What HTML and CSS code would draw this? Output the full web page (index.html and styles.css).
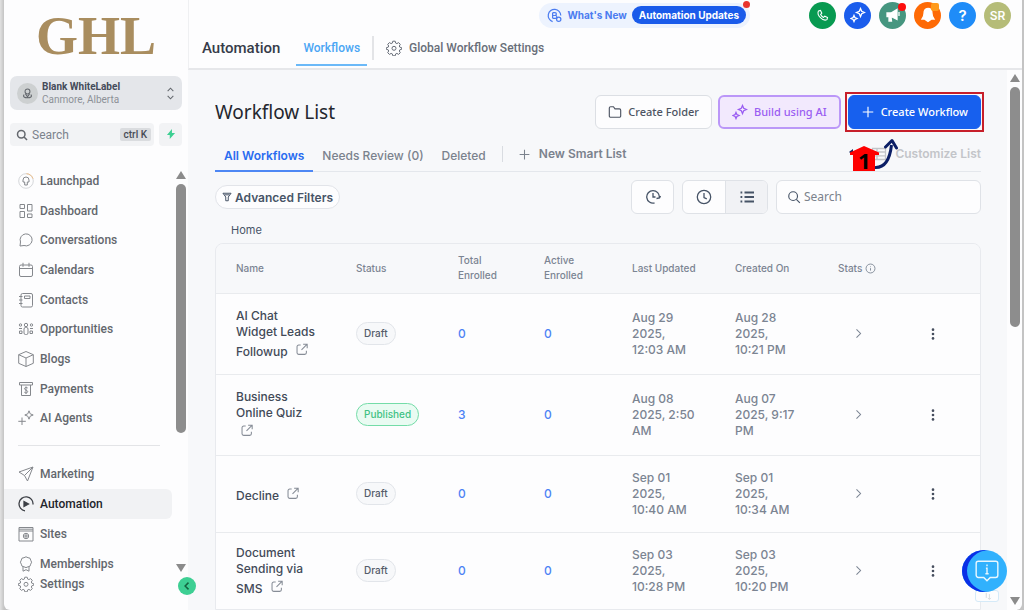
FILE: index.html
```html
<!DOCTYPE html>
<html lang="en">
<head>
    <meta charset="UTF-8">
    <meta name="viewport" content="width=device-width, initial-scale=1.0">
    <title>Automation - Workflows</title>
    <link rel="stylesheet" href="styles.css">
</head>
<body>
    <!-- Icons used more than once -->
    <svg class="sprite" aria-hidden="true">
        <symbol id="i-gear" viewBox="0 0 16 16"><path d="M6.8 1.2h2.4l.5 1.9 1.2.5 1.7-1 1.7 1.7-1 1.7.5 1.2 1.9.5v1.6l-1.9.5-.5 1.2 1 1.7-1.7 1.7-1.7-1-1.2.5-.5 1.9H6.8l-.5-1.9-1.2-.5-1.7 1-1.7-1.7 1-1.7-.5-1.2-1.9-.5V7.700l1.900-.5.5-1.200-1-1.700 1.700-1.700 1.700 1 1.200-.5z"/><circle cx="8" cy="8.300" r="2"/></symbol>
        <symbol id="i-sparkles" viewBox="0 0 16 16"><path d="M10.500 1.500l1.200 2.800 2.800 1.200-2.800 1.200-1.200 2.800-1.200-2.800-2.800-1.200 2.800-1.200zM4 8.500l.9 2.100 2.100.9-2.100.9L4 14.500l-.9-2.100-2.100-.9 2.100-.9z"/></symbol>
        <symbol id="i-open" viewBox="0 0 16 16"><path d="M7 2.500H4.500a2 2 0 0 0-2 2v7.500a2 2 0 0 0 2 2H12a2 2 0 0 0 2-2V9.500M10 1.500h5v5M15 1.500L8 8.500"/></symbol>
        <symbol id="i-next" viewBox="0 0 16 16"><path d="M5.500 3l5 5-5 5"/></symbol>
        <symbol id="i-dots" viewBox="0 0 16 16"><circle cx="8" cy="3" r="1.500"/><circle cx="8" cy="8" r="1.500"/><circle cx="8" cy="13" r="1.500"/></symbol>
        <symbol id="i-plus" viewBox="0 0 16 16"><path d="M8 2v12M2 8h12"/></symbol>
        <symbol id="i-search" viewBox="0 0 16 16"><circle cx="7" cy="7" r="5"/><path d="M10.700 10.700l4 4"/></symbol>
        <symbol id="i-up" viewBox="0 0 10 8"><path d="M5 0l5 8H0z"/></symbol>
        <symbol id="i-down" viewBox="0 0 10 8"><path d="M5 8L0 0h10z"/></symbol>
    </svg>

    <div class="app">
        <aside class="sidebar">
            <div class="logo">GHL</div>
            <button class="account">
                <span class="account-avatar"><svg class="icon" viewBox="0 0 16 16"><circle cx="8" cy="5.500" r="3"/><path d="M5.500 8.500L8 12l2.500-3.500M4 9.500c-5 5 13 5 8 0"/></svg></span>
                <span class="account-text"><strong>Blank WhiteLabel</strong><span>Canmore, Alberta</span></span>
                <svg class="icon account-toggle" viewBox="0 0 10 16"><path d="M1.500 5L5 1.500 8.500 5M1.500 11L5 14.500 8.500 11"/></svg>
            </button>
            <div class="side-search">
                <label class="search-field">
                    <svg class="icon"><use href="#i-search"/></svg>
                    <input type="text" placeholder="Search" aria-label="Search menu">
                    <kbd>ctrl K</kbd>
                </label>
                <button class="quick" aria-label="Quick actions"><svg viewBox="0 0 16 16"><path d="M9.500 0L1.500 9.500h4.500V16L14.500 6.500H9.500z"/></svg></button>
            </div>

            <div class="side-scroll">
                <nav class="menu">
                    <ul class="menu-main">
                        <li><a href="#"><svg class="icon" viewBox="0 0 16 16"><circle cx="8" cy="8" r="7.300" stroke="#d5d7da"/><path d="M8.500.7a7.300 7.300 0 0 1 6.500 5" stroke="#eebf8a"/><path d="M5 9V7a3 3 0 0 1 6 0v2H9.300v3H6.700V9z"/></svg>Launchpad</a></li>
                        <li><a href="#"><svg class="icon" viewBox="0 0 16 16"><path d="M2 1.500h4.500v4H2zM9.500 1.500H14v6.500H9.500zM2 8.500h4.500v6H2zM9.500 11H14v3.500H9.500z"/></svg>Dashboard</a></li>
                        <li><a href="#"><svg class="icon" viewBox="0 0 16 16"><path d="M2 14l.5-4A6 6 0 1 1 6 13.500z"/></svg>Conversations</a></li>
                        <li><a href="#"><svg class="icon" viewBox="0 0 16 16"><rect x="1.500" y="3" width="13" height="11.500" rx="1.500"/><path d="M1.500 6.500h13M5 .8v4M11 .8v4"/></svg>Calendars</a></li>
                        <li><a href="#"><svg class="icon" viewBox="0 0 16 16"><rect x="3" y="1.500" width="11.500" height="13.500" rx="1.500"/><path d="M6.500 4h5.500v2.500H6.500zM1 4.500h3.500M1 8h3.500M1 11.500h3.500"/></svg>Contacts</a></li>
                        <li><a href="#"><svg class="icon" viewBox="0 0 16 16"><circle cx="8" cy="4" r="1.700"/><rect x="6" y="6.500" width="4" height="7" rx="1.500"/><circle cx="2.500" cy="4" r="1.200"/><circle cx="13.500" cy="4" r="1.200"/><path d="M1 7.500h3M12 7.500h3M1.500 10h2.500v2.500H1.500zM12 10h2.500v2.500H12z"/></svg>Opportunities</a></li>
                        <li><a href="#"><svg class="icon" viewBox="0 0 16 16"><path d="M8 .5l7.300 3.200v8.600L8 15.500.7 12.300V3.700zM.7 3.700L8 7l7.300-3.300M8 7v8.500"/></svg>Blogs</a></li>
                        <li><a href="#"><svg class="icon" viewBox="0 0 16 16"><path d="M1.500 1.500h13v2.500h-13zM3.500 4v10.500h9V4M9.700 7c-1-1-3.200-.6-3.200.7C6.500 9.300 9.700 9 9.700 10.600c0 1.400-2.400 1.700-3.400.6M8 5.500v7.500"/></svg>Payments</a></li>
                        <li><a href="#"><svg class="icon" viewBox="0 0 16 16"><path d="M11 .8l1.200 3 3 1.200-3 1.200-1.200 3-1.200-3-3-1.200 3-1.200zM4 7.500v7.500M.3 11.300h7.500"/></svg>AI Agents</a></li>
                    </ul>
                    <ul class="menu-extra">
                        <li><a href="#"><svg class="icon" viewBox="0 0 16 16"><path d="M1 6L15 1 9.500 15 6.500 9.500zM6.500 9.500L15 1"/></svg>Marketing</a></li>
                        <li><a href="#" class="active"><svg class="icon" viewBox="0 0 16 16"><path d="M7 14.800A7 7 0 1 1 15 8.500"/><path d="M6 5.500L10.500 8 6 10.500z" fill="currentColor"/></svg>Automation</a></li>
                        <li><a href="#"><svg class="icon" viewBox="0 0 16 16"><path d="M1 1.500h14v13.500H1zM1 5h14M1 3.200h14"/><circle cx="8" cy="10" r="2.700"/><path d="M8 7.300v5.400M5.300 10h5.400"/></svg>Sites</a></li>
                        <li><a href="#"><svg class="icon" viewBox="0 0 16 16"><path d="M8 .8l2 .9 2 .5.700 2 .9 2-.9 2-.7 2-2 .6-2 .8-2-.8-2-.6-.7-2-.9-2 .9-2 .7-2 2-.5zM5 11v4.200l3-1.500 3 1.500V11"/></svg>Memberships</a></li>
                    </ul>
                </nav>
                <div class="scrollbar" aria-hidden="true">
                    <svg class="arrow"><use href="#i-up"/></svg>
                    <span class="thumb"></span>
                    <svg class="arrow arrow-end"><use href="#i-down"/></svg>
                </div>
            </div>
            <a href="#" class="settings"><svg class="icon"><use href="#i-gear"/></svg>Settings</a>
            <button class="collapse" aria-label="Collapse sidebar"><svg class="icon" viewBox="0 0 16 16"><path d="M10 3.500L5.500 8l4.500 4.500"/></svg></button>
        </aside>

        <div class="main">
            <header class="topbar">
                <div class="topbar-actions">
                    <div class="news">
                        <svg class="icon" viewBox="0 0 16 16"><path d="M6 14.500A6.700 6.700 0 1 1 14.700 8"/><path d="M6 5v6M6 5h2.500a1.500 1.500 0 0 1 0 3H6h3a1.500 1.500 0 0 1 0 3H6"/><circle cx="12.500" cy="12" r="2.300"/></svg>
                        <a href="#">What's New</a>
                        <a href="#" class="news-badge">Automation Updates</a>
                    </div>
                    <button class="round green" aria-label="Phone"><svg class="icon" viewBox="0 0 16 16"><path d="M3 2.500l2.500-.7 1.700 3.400-1.500 1.500c.8 1.700 2 2.900 3.600 3.700l1.500-1.500 3.400 1.700-.7 2.500C8.500 15.500.5 8 3 2.500z"/></svg></button>
                    <button class="round blue" aria-label="AI assistant"><svg class="icon"><use href="#i-sparkles"/></svg></button>
                    <button class="round teal" aria-label="Announcements"><svg class="icon" viewBox="0 0 16 16"><path d="M2 6h4l6-3.500v10L6 9.500H2zM4 10v4h2.500L6 10z" fill="currentColor"/><path d="M14 5v4"/></svg><span class="dot"></span></button>
                    <button class="round orange" aria-label="Notifications"><svg class="icon" viewBox="0 0 16 16"><path d="M8 1.500c3 0 4 2 4 5s1 4 2 5.500H2c1-1.500 2-2.500 2-5.500s1-5 4-5zM6.500 13.500h3l-1.500 1z" fill="currentColor"/></svg><span class="dot amber"></span></button>
                    <button class="round sky" aria-label="Help">?</button>
                    <button class="round olive" aria-label="Profile">SR</button>
                </div>
                <div class="topbar-nav">
                    <h2>Automation</h2>
                    <a href="#" class="current">Workflows</a>
                    <span class="rule"></span>
                    <a href="#" class="global"><svg class="icon"><use href="#i-gear"/></svg>Global Workflow Settings</a>
                </div>
            </header>

            <div class="body">
                <main class="content">
                    <div class="heading">
                        <h1>Workflow List</h1>
                        <button class="btn"><svg class="icon" viewBox="0 0 16 16"><path d="M1.500 3.500a1.500 1.500 0 0 1 1.500-1.500h3.200L8 4.500h5a1.500 1.500 0 0 1 1.500 1.500v6.500a1.500 1.500 0 0 1-1.500 1.500H3a1.500 1.500 0 0 1-1.500-1.500z"/></svg>Create Folder</button>
                        <button class="btn btn-ai"><svg class="icon"><use href="#i-sparkles"/></svg>Build using AI</button>
                        <button class="btn btn-primary"><svg class="icon"><use href="#i-plus"/></svg>Create Workflow</button>
                    </div>

                    <div class="tabs">
                        <a href="#" class="selected">All Workflows</a>
                        <a href="#">Needs Review (0)</a>
                        <a href="#">Deleted</a>
                        <button class="smart"><svg class="icon"><use href="#i-plus"/></svg>New Smart List</button>
                        <button class="customize" disabled><svg class="icon" viewBox="0 0 16 16"><path d="M1.500 2.500h13v11h-13zM1.500 6h13M1.500 9.800h13M6 2.500v11"/></svg>Customize List</button>
                        <!-- Step marker pointing at the create button -->
                        <div class="step">
                            <svg viewBox="0 0 50 36"><path d="M1 15l4-3v6z" fill="#12245f"/><path d="M16 9L31 15.500v2.500H27V34H5V18H2v-2.500z" fill="#fe0000"/><path d="M27 30.500C37 31 42 21 43.500 8" fill="none" stroke="#0c1f66" stroke-width="3"/><path d="M37.500 10l6.500-6.500 4.500 7.500" fill="none" stroke="#0c1f66" stroke-width="3" stroke-linecap="round" stroke-linejoin="round"/></svg>
                            <span>1</span>
                        </div>
                    </div>

                    <div class="tools">
                        <button class="filters"><svg class="icon" viewBox="0 0 16 16"><path d="M1.500 2h13l-4.500 6v6H6V8zM4 4.500h8"/></svg>Advanced Filters</button>
                        <button class="tool" aria-label="Activity"><svg class="icon" viewBox="0 0 16 16"><path d="M9.500 14A6.300 6.300 0 1 1 14.300 8.500M8 4v4h2.500M11.500 9.500l3-.5 1-2"/></svg></button>
                        <div class="switch">
                            <button aria-label="Recent"><svg class="icon" viewBox="0 0 16 16"><circle cx="8" cy="8" r="6.700"/><path d="M8 4v4.500l2.800 1.300"/></svg></button>
                            <button class="on" aria-label="List view"><svg class="icon" viewBox="0 0 16 16"><path d="M5.500 3.500H15M5.500 8H15M5.500 12.500H15M1.500 3.500h1.800M1.500 8h1.800M1.500 12.500h1.800" stroke-width="2"/></svg></button>
                        </div>
                        <label class="find">
                            <svg class="icon"><use href="#i-search"/></svg>
                            <input type="text" placeholder="Search" aria-label="Search workflows">
                        </label>
                    </div>

                    <a href="#" class="crumb">Home</a>

                    <div class="table-wrap">
                        <table>
                            <colgroup><col class="c-name"><col class="c-status"><col class="c-total"><col class="c-active"><col class="c-date"><col class="c-date"><col class="c-stats"><col></colgroup>
                            <thead>
                                <tr>
                                    <th>Name</th>
                                    <th>Status</th>
                                    <th>Total Enrolled</th>
                                    <th>Active Enrolled</th>
                                    <th class="nowrap">Last Updated</th>
                                    <th class="nowrap">Created On</th>
                                    <th class="nowrap">Stats <svg class="icon" viewBox="0 0 16 16"><circle cx="8" cy="8" r="6.500"/><path d="M8 7.500v3.500M8 5v1"/></svg></th>
                                    <th></th>
                                </tr>
                            </thead>
                            <tbody>
                                <tr class="tall">
                                    <td class="name"><a href="#">AI Chat Widget Leads Followup <svg class="icon"><use href="#i-open"/></svg></a></td>
                                    <td><span class="tag">Draft</span></td>
                                    <td class="count">0</td>
                                    <td class="count">0</td>
                                    <td>Aug 29 2025, 12:03 AM</td>
                                    <td>Aug 28 2025, 10:21 PM</td>
                                    <td class="more"><button aria-label="Show stats"><svg class="icon"><use href="#i-next"/></svg></button></td>
                                    <td class="menu-cell"><button aria-label="Row menu"><svg><use href="#i-dots"/></svg></button></td>
                                </tr>
                                <tr class="tall">
                                    <td class="name"><a href="#">Business Online Quiz <svg class="icon"><use href="#i-open"/></svg></a></td>
                                    <td><span class="tag live">Published</span></td>
                                    <td class="count">3</td>
                                    <td class="count">0</td>
                                    <td>Aug 08 2025, 2:50 AM</td>
                                    <td>Aug 07 2025, 9:17 PM</td>
                                    <td class="more"><button aria-label="Show stats"><svg class="icon"><use href="#i-next"/></svg></button></td>
                                    <td class="menu-cell"><button aria-label="Row menu"><svg><use href="#i-dots"/></svg></button></td>
                                </tr>
                                <tr>
                                    <td class="name"><a href="#">Decline <svg class="icon"><use href="#i-open"/></svg></a></td>
                                    <td><span class="tag">Draft</span></td>
                                    <td class="count">0</td>
                                    <td class="count">0</td>
                                    <td>Sep 01 2025, 10:40 AM</td>
                                    <td>Sep 01 2025, 10:34 AM</td>
                                    <td class="more"><button aria-label="Show stats"><svg class="icon"><use href="#i-next"/></svg></button></td>
                                    <td class="menu-cell"><button aria-label="Row menu"><svg><use href="#i-dots"/></svg></button></td>
                                </tr>
                                <tr>
                                    <td class="name"><a href="#">Document Sending via SMS <svg class="icon"><use href="#i-open"/></svg></a></td>
                                    <td><span class="tag">Draft</span></td>
                                    <td class="count">0</td>
                                    <td class="count">0</td>
                                    <td>Sep 03 2025, 10:28 PM</td>
                                    <td>Sep 03 2025, 10:20 PM</td>
                                    <td class="more"><button aria-label="Show stats"><svg class="icon"><use href="#i-next"/></svg></button></td>
                                    <td class="menu-cell"><button aria-label="Row menu"><svg><use href="#i-dots"/></svg></button></td>
                                </tr>
                            </tbody>
                        </table>
                    </div>
                </main>
                <div class="scrollbar page-scroll" aria-hidden="true">
                    <svg class="arrow"><use href="#i-up"/></svg>
                    <span class="thumb"></span>
                    <svg class="arrow arrow-end"><use href="#i-down"/></svg>
                </div>
            </div>
        </div>

        <div class="help">
            <button class="help-bubble" aria-label="Help"><svg class="icon" viewBox="0 0 24 24"><path d="M4 3h16a2 2 0 0 1 2 2v11a2 2 0 0 1-2 2h-5l-3 3-3-3H4a2 2 0 0 1-2-2V5a2 2 0 0 1 2-2zM12 6v1.500M11 9.500h1v5M10.500 14.500h3"/></svg></button>
            <div class="help-tail"><svg class="icon" viewBox="0 0 16 16"><path d="M6 3v8M11 5v8M8.500 11l2.500 2.500 2.500-2.500"/></svg></div>
        </div>
    </div>
</body>
</html>
```
FILE: styles.css
```css
* {
    box-sizing: border-box;
}
body {
    margin: 0;
    height: 100vh;
    overflow: hidden;
    background: linear-gradient(90deg, #e2e2e2, #c4c4c4 4px, #c4c4c4);
    font-family: Inter, "Liberation Sans", sans-serif;
    font-size: 12px;
    color: #475467;
}
h1, h2, ul {
    margin: 0;
    padding: 0;
}
ul {
    list-style: none;
}
a {
    color: inherit;
    text-decoration: none;
}
button, input {
    font: inherit;
    color: inherit;
    border: 0;
    padding: 0;
    background: none;
}
input {
    min-width: 0;
    width: 100%;
    outline: none;
}
input::placeholder {
    color: #7b828c;
    opacity: 1;
}
.sprite {
    position: absolute;
    width: 0;
    height: 0;
}
.icon {
    flex: none;
    width: 16px;
    height: 16px;
    fill: none;
    stroke: currentColor;
    stroke-width: 1.3;
}
.app {
    position: relative;
    display: flex;
    height: 100vh;
    margin: 0 2px 0 4px;
    background: #fdfdfe;
    border-radius: 0 0 6px 6px;
    overflow: hidden;
}

/* Sidebar */
.sidebar {
    position: relative;
    flex: none;
    display: flex;
    flex-direction: column;
    width: 184px;
    font-family: Roboto, sans-serif;
    font-size: 12px;
    font-weight: 500;
    color: #63676d;
}
.logo {
    height: 76px;
    padding-top: 4px;
    text-align: center;
    font: bold 54px/64px "Liberation Serif", serif;
    color: #a98d5f;
}
.account {
    display: flex;
    align-items: center;
    gap: 4px;
    height: 34px;
    margin: 0 6px;
    padding: 0 7px;
    border-radius: 7px;
    background: #e4e6ea;
    text-align: left;
}
.account-avatar {
    display: flex;
    align-items: center;
    justify-content: center;
    width: 21px;
    height: 21px;
    border-radius: 50%;
    background: #cdd0d1;
}
.account-avatar .icon {
    width: 13px;
    height: 13px;
}
.account-text {
    flex: 1;
    font-size: 10px;
    line-height: 13px;
    font-weight: 400;
    color: #8d9197;
}
.account-text strong {
    display: block;
    font-weight: 700;
    color: #444b5a;
}
.account-toggle {
    width: 9px;
    height: 13px;
}
.side-search {
    display: flex;
    gap: 5px;
    margin: 13px 6px 0;
}
.search-field {
    flex: 1;
    display: flex;
    align-items: center;
    gap: 4px;
    height: 23px;
    padding: 0 3px 0 6px;
    border-radius: 4px;
    background: #f2f3f5;
}
.search-field input {
    font-weight: 400;
}
.search-field .icon {
    width: 12px;
    height: 12px;
    stroke-width: 2;
}
.search-field kbd {
    flex: none;
    padding: 0 4px;
    border-radius: 2px;
    background: #dadcdf;
    font: 500 10px/13px Roboto, sans-serif;
    color: #474b55;
}
.quick {
    width: 23px;
    border-radius: 4px;
    background: #f2f3f5;
}
.quick svg {
    width: 10px;
    height: 10px;
    fill: #3ccf92;
}
.side-scroll {
    display: flex;
    margin-top: 20px;
}
.menu {
    flex: 1;
}
.menu a, .settings {
    display: flex;
    align-items: center;
    gap: 6px;
    height: 30px;
    padding-left: 14px;
    border-radius: 0 6px 6px 0;
}
.menu .icon, .settings .icon {
    color: #85888d;
    stroke-width: 1;
}
.menu-main {
    display: flex;
    flex-direction: column;
    justify-content: space-between;
    height: 267px;
}
.menu-main li {
    min-height: 0;
}
.menu-extra {
    position: relative;
    padding-top: 26px;
}
.menu-extra::before {
    content: "";
    display: block;
    position: absolute;
    left: 14px;
    right: 12px;
    top: 12px;
    height: 1px;
    background: #e3e4e7;
}
.menu a.active {
    background: #f1f2f4;
    color: #22242b;
}
.menu a.active .icon {
    color: #3c3f45;
    stroke-width: 1.3;
}
.settings {
    height: 20px;
    margin-top: -5px;
}
.scrollbar {
    flex: none;
    display: flex;
    flex-direction: column;
    align-items: center;
    width: 16px;
    padding: 5px 2px 7px 4px;
}
.arrow {
    flex: none;
    width: 10px;
    height: 8px;
    fill: #8b8b8b;
}
.arrow-end {
    margin-top: auto;
}
.thumb {
    width: 10px;
    height: 249px;
    margin-top: 5px;
    border-radius: 5px;
    background: #8d8d8d;
}
.collapse {
    position: absolute;
    right: -8px;
    bottom: 15px;
    z-index: 2;
    display: flex;
    align-items: center;
    justify-content: center;
    width: 18px;
    height: 18px;
    border-radius: 50%;
    background: #3dcf93;
    color: #14633f;
}
.collapse .icon {
    width: 12px;
    height: 12px;
    stroke-width: 2;
}

/* Top bar */
.main {
    flex: 1;
    min-width: 0;
    display: flex;
    flex-direction: column;
}
.topbar {
    flex: none;
    padding-bottom: 2px;
    border-bottom: 2px solid #e6e7ea;
    border-left: 1px solid #eff0f2;
}
.topbar-actions {
    display: flex;
    justify-content: flex-end;
    align-items: center;
    gap: 8px;
    height: 30px;
    padding-right: 11px;
}
.news {
    position: relative;
    display: flex;
    align-items: center;
    gap: 5px;
    height: 25px;
    margin-right: 51px;
    padding: 0 4px 0 8px;
    border-radius: 13px;
    background: #edf3fe;
    font-size: 10px;
    font-weight: 700;
    color: #4b7cf0;
}
.news .icon {
    width: 15px;
    height: 15px;
}
.news-badge {
    padding: 0 7px;
    border-radius: 9px;
    background: #1a5bea;
    color: #fff;
    line-height: 18px;
}
.news::after {
    content: "";
    position: absolute;
    right: 0;
    top: -2px;
    width: 7px;
    height: 7px;
    border-radius: 50%;
    background: #e8352e;
}
.round {
    position: relative;
    display: flex;
    align-items: center;
    justify-content: center;
    width: 27px;
    height: 27px;
    border-radius: 50%;
    color: #fff;
    font-size: 12px;
    font-weight: 600;
}
.green {
    background: #089a51;
}
.green .icon {
    width: 13px;
    height: 13px;
}
.blue {
    background: #1b5dec;
}
.teal {
    background: #469680;
}
.orange {
    background: #fe6a06;
}
.sky {
    background: #1f8cf8;
    font-size: 15px;
}
.olive {
    background: #b5bc78;
}
.dot {
    position: absolute;
    right: 0;
    top: 1px;
    width: 8px;
    height: 8px;
    border-radius: 50%;
    background: #fd0d0d;
}
.dot.amber {
    right: 2px;
    border-radius: 2px;
    background: #ff9a1c;
}
.topbar-nav {
    display: flex;
    align-items: center;
    height: 36px;
    padding-left: 13px;
    font: 500 12px/36px Roboto, sans-serif;
    color: #686e79;
}
.topbar-nav h2 {
    font-size: 15px;
    font-weight: 500;
    line-height: 36px;
    color: #363b49;
}
.topbar-nav .current {
    align-self: stretch;
    margin-left: 16px;
    padding: 0 7px;
    border-bottom: 2px solid #6bb9f8;
    color: #4ba6f4;
}
.rule {
    width: 2px;
    height: 24px;
    margin: 0 12px 0 5px;
    background: #e3e4e7;
}
.global {
    display: flex;
    align-items: center;
    gap: 7px;
}
.global .icon {
    stroke-width: 1;
}

/* Page body */
.body {
    flex: 1;
    min-height: 0;
    display: flex;
}
.content {
    flex: 1;
    min-width: 0;
    overflow: hidden;
    padding: 25px 26px 0 27px;
    background: #f7f8fa;
}
.page-scroll {
    width: 15px;
    padding: 4px 0 5px;
}
.page-scroll .thumb {
    height: 240px;
}
.heading {
    display: flex;
    align-items: center;
    gap: 6px;
}
.heading h1 {
    flex: 1;
    font: 400 19px/34px "Noto Sans", sans-serif;
    color: #24272e;
}
.btn {
    position: relative;
    display: flex;
    align-items: center;
    gap: 6px;
    height: 34px;
    padding: 0 12px;
    border: 1px solid #dcdfe4;
    border-radius: 6px;
    background: #fdfdfe;
    font: 500 11px/16px "Noto Sans", sans-serif;
    color: #4d5462;
}
.btn .icon {
    width: 14px;
    height: 14px;
}
.btn-ai {
    padding: 0 12px;
    border: 2px solid #bb97f8;
    background: #f2e9fd;
    color: #9a5df2;
}
.btn-ai .icon {
    width: 16px;
    height: 16px;
}
.btn-primary {
    margin-left: 1px;
    border-color: #1760ee;
    background: #1760ee;
    color: #fff;
}
.btn-primary::after {
    content: "";
    position: absolute;
    inset: -4px;
    border: 2px solid #c71f2a;
}
.tabs {
    position: relative;
    display: flex;
    height: 43px;
    border-bottom: 1px solid #e4e7ec;
    font-weight: 500;
    line-height: 16px;
    color: #7b828d;
}
.tabs > a {
    height: 43px;
    padding: 19px 9px 0;
}
.tabs > a.selected {
    border-bottom: 2px solid #4d87f4;
    font-weight: 600;
    color: #2a6cf0;
}
.smart {
    display: flex;
    align-items: center;
    align-self: flex-start;
    gap: 8px;
    height: 16px;
    margin: 17px 0 0 7px;
    padding-left: 15px;
    border-left: 1px solid #d9dce1;
    font-weight: 600;
}
.smart .icon {
    width: 13px;
    height: 13px;
}
.customize {
    display: flex;
    align-items: center;
    gap: 8px;
    align-self: flex-start;
    margin: 17px 0 0 auto;
    font-weight: 600;
    line-height: 16px;
    color: #c3c5c9;
}
.step {
    position: absolute;
    right: 83px;
    top: 8px;
    width: 50px;
    height: 36px;
}
.step svg {
    display: block;
    width: 50px;
    height: 36px;
}
.step span {
    position: absolute;
    left: 10px;
    top: 12px;
    font: bold 22px/22px "Noto Sans", sans-serif;
    color: #000;
}
.tools {
    display: flex;
    align-items: center;
    gap: 8px;
    margin-top: 8px;
}
.filters {
    display: flex;
    align-items: center;
    gap: 3px;
    height: 24px;
    margin-right: auto;
    padding: 0 6px;
    border: 1px solid #e2e4e9;
    border-radius: 12px;
    background: #fdfdfe;
    font-weight: 600;
}
.filters .icon {
    width: 10px;
    height: 10px;
    stroke-width: 1.6;
}
.tool, .switch, .find {
    display: flex;
    align-items: center;
    height: 34px;
    border: 1px solid #dfe2e7;
    border-radius: 6px;
    background: #fdfdfe;
}
.tool {
    justify-content: center;
    width: 43px;
}
.tool .icon, .switch .icon {
    width: 16px;
    height: 16px;
}
.switch {
    overflow: hidden;
}
.switch button {
    display: flex;
    align-items: center;
    justify-content: center;
    width: 42px;
    height: 32px;
}
.switch .on {
    border-left: 1px solid #dfe2e7;
    background: #f1f2f5;
}
.find {
    gap: 3px;
    width: 205px;
    padding: 0 10px;
}
.find .icon {
    width: 14px;
    height: 14px;
}
.find input {
    font: 400 12px/16px "Noto Sans", sans-serif;
}
.crumb {
    display: block;
    padding: 8px 16px 5px;
    font-size: 11px;
    line-height: 16px;
}

/* Workflow table */
.table-wrap {
    border: 1px solid #e8eaee;
    border-radius: 8px 8px 0 0;
    overflow: hidden;
}
table {
    width: 100%;
    border-collapse: collapse;
    table-layout: fixed;
    line-height: 16px;
    color: #7b8492;
}
.c-name {
    width: 140px;
}
.c-status {
    width: 102px;
}
.c-total {
    width: 86px;
}
.c-active {
    width: 88px;
}
.c-date {
    width: 103px;
}
.c-stats {
    width: 80px;
}
th {
    height: 49px;
    padding: 0 38px 0 0;
    font-size: 10px;
    font-weight: 500;
    line-height: 15px;
    text-align: left;
    background: #f7f8fa;
}
th .icon {
    width: 11px;
    height: 11px;
    vertical-align: -2px;
}
.nowrap {
    padding-right: 0;
    white-space: nowrap;
}
th:first-child, td:first-child {
    padding-left: 20px;
}
td {
    height: 77px;
    padding: 0 39px 0 0;
    border-top: 1px solid #e9ebee;
    background: #fdfdfe;
    font-weight: 500;
}
td:nth-child(2) {
    padding-right: 0;
}
.tall td {
    height: 81px;
}
.name {
    color: #424a58;
}
.name .icon {
    width: 13px;
    height: 13px;
    margin: 3px 0 0 4px;
    color: #878d97;
    vertical-align: 0;
}
.tag {
    display: inline-block;
    padding: 0 7px;
    border: 1px solid #e2e5ea;
    border-radius: 12px;
    background: #f7f8fa;
    font-size: 10px;
    line-height: 21px;
    color: #545c6a;
}
.tag.live {
    border-color: #74dca8;
    background: #e9fbf2;
    color: #3fc284;
}
.count {
    color: #4d83f5;
}
.more button, .menu-cell button {
    display: flex;
    justify-content: center;
    width: 16px;
}
.more {
    padding-left: 12px;
}
.more .icon {
    width: 13px;
    height: 13px;
}
.menu-cell {
    padding: 0 0 0 7px;
}
.menu-cell svg {
    width: 14px;
    height: 14px;
    fill: #454d5d;
}

/* Floating help */
.help {
    position: absolute;
    right: 15px;
    bottom: 8px;
    width: 45px;
}
.help-bubble {
    position: relative;
    z-index: 1;
    display: flex;
    align-items: center;
    justify-content: center;
    width: 45px;
    height: 42px;
    padding-left: 4px;
    border-radius: 50%;
    background: #31b1fd;
    box-shadow: inset 5px 0 0 #0a2fe6;
    color: #e9f7ff;
}
.help-bubble .icon {
    width: 26px;
    height: 26px;
}
.help-tail {
    height: 12px;
    width: 24px;
    margin: -2px 0 0 13px;
    border: 1px solid #d5eaf8;
    border-radius: 3px;
    background: #fdfdfe;
    text-align: center;
    line-height: 0;
    color: #d0d4d8;
}
.help-tail .icon {
    width: 11px;
    height: 10px;
}
```
